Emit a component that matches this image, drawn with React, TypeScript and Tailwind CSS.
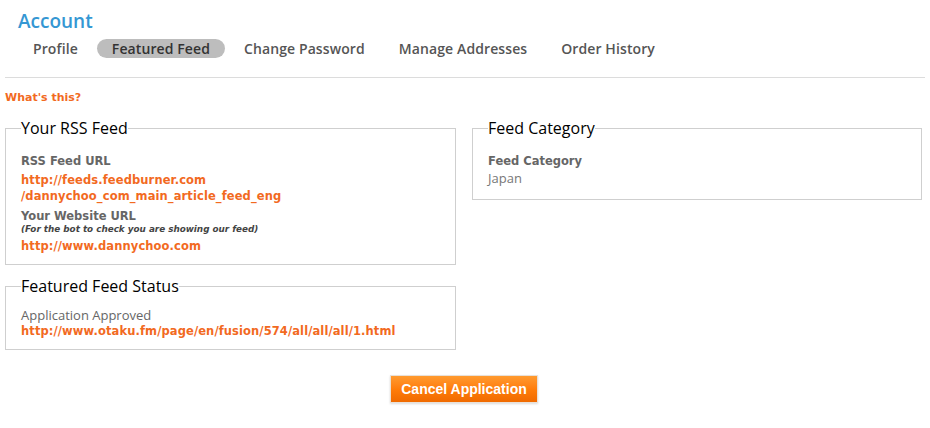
const tabs = ['Profile', 'Featured Feed', 'Change Password', 'Manage Addresses', 'Order History'];

function Box({ title, children, className = '' }: { title: string; children: React.ReactNode; className?: string }) {
  return (
    <fieldset className={`border border-[#cfcfcf] pl-[15px] pr-4 ${className}`}>
      <legend className="font-['Open_Sans'] text-[16px] leading-[18px] text-black px-0">{title}</legend>
      {children}
    </fieldset>
  );
}

function Label({ children }: { children: React.ReactNode }) {
  return <div className="font-['DejaVu_Sans'] font-bold text-[11.5px] leading-[16px] text-[#666]">{children}</div>;
}

function Link({ children }: { children: React.ReactNode }) {
  return (
    <div className="font-['DejaVu_Sans'] font-bold text-[11.5px] leading-[16px] tracking-[0.1px] text-[#f26a1f]">
      {children}
    </div>
  );
}

export default function App() {
  return (
    <div className="w-[930px] h-[428px] bg-white overflow-hidden">
      <h1 className="pl-[18px] pt-[9px] font-['Open_Sans'] font-semibold text-[19px] leading-[24px] text-[#3597d3]">Account</h1>
      <nav className="flex gap-[4px] pl-[18px] mt-[6px]">
        {tabs.map((t) => (
          <span
            key={t}
            className={`px-[15px] h-[19px] flex items-center rounded-full font-['Open_Sans'] font-semibold text-[14px] tracking-[0.1px] ${
              t === 'Featured Feed' ? 'bg-[#bdbdbd] text-[#333]' : 'text-[#555]'
            }`}
          >
            {t}
          </span>
        ))}
      </nav>
      <hr className="mx-[5px] mt-[19px] border-0 border-t border-[#dcdcdc]" />
      <div className="pl-[5px] pt-[13px] font-['DejaVu_Sans'] font-bold text-[11px] leading-[14px] text-[#f26a1f]">What's this?</div>

      <div className="flex gap-4 px-[5px] mt-[14px] items-start">
        <div className="w-[451px] flex flex-col gap-[12px]">
          <Box title="Your RSS Feed" className="pt-[16px] pb-[10px]">
            <Label>RSS Feed URL</Label>
            <div className="mt-[3px]">
              <Link>http://feeds.feedburner.com</Link>
              <Link>/dannychoo_com_main_article_feed_eng</Link>
            </div>
            <div className="mt-[4px]">
              <Label>Your Website URL</Label>
              <div className="font-['DejaVu_Sans'] font-bold italic text-[8.8px] leading-[10px] text-[#444]">
                (For the bot to check you are showing our feed)
              </div>
            </div>
            <div className="mt-[4px]">
              <Link>http://www.dannychoo.com</Link>
            </div>
          </Box>
          <Box title="Featured Feed Status" className="pt-[12px] pb-[10px]">
            <div className="font-['Open_Sans'] text-[13px] leading-[16px] text-[#666]">Application Approved</div>
            <Link>http://www.otaku.fm/page/en/fusion/574/all/all/all/1.html</Link>
          </Box>
        </div>
        <div className="w-[450px]">
          <Box title="Feed Category" className="pt-[16px] pb-[11px]">
            <Label>Feed Category</Label>
            <div className="font-['Open_Sans'] text-[13px] leading-[19px] text-[#777]">Japan</div>
          </Box>
        </div>
      </div>

      <div className="flex justify-center mt-[25px] pr-[2px]">
        <button className="w-[148px] h-[28px] bg-gradient-to-b from-[#ff9a2e] via-[#ff7d0a] to-[#f06a00] border border-[#e8e0d8] font-['Liberation_Sans'] font-bold text-[14px] text-white shadow-[0_1px_2px_rgba(0,0,0,0.15)]">
          Cancel Application
        </button>
      </div>
    </div>
  );
}
